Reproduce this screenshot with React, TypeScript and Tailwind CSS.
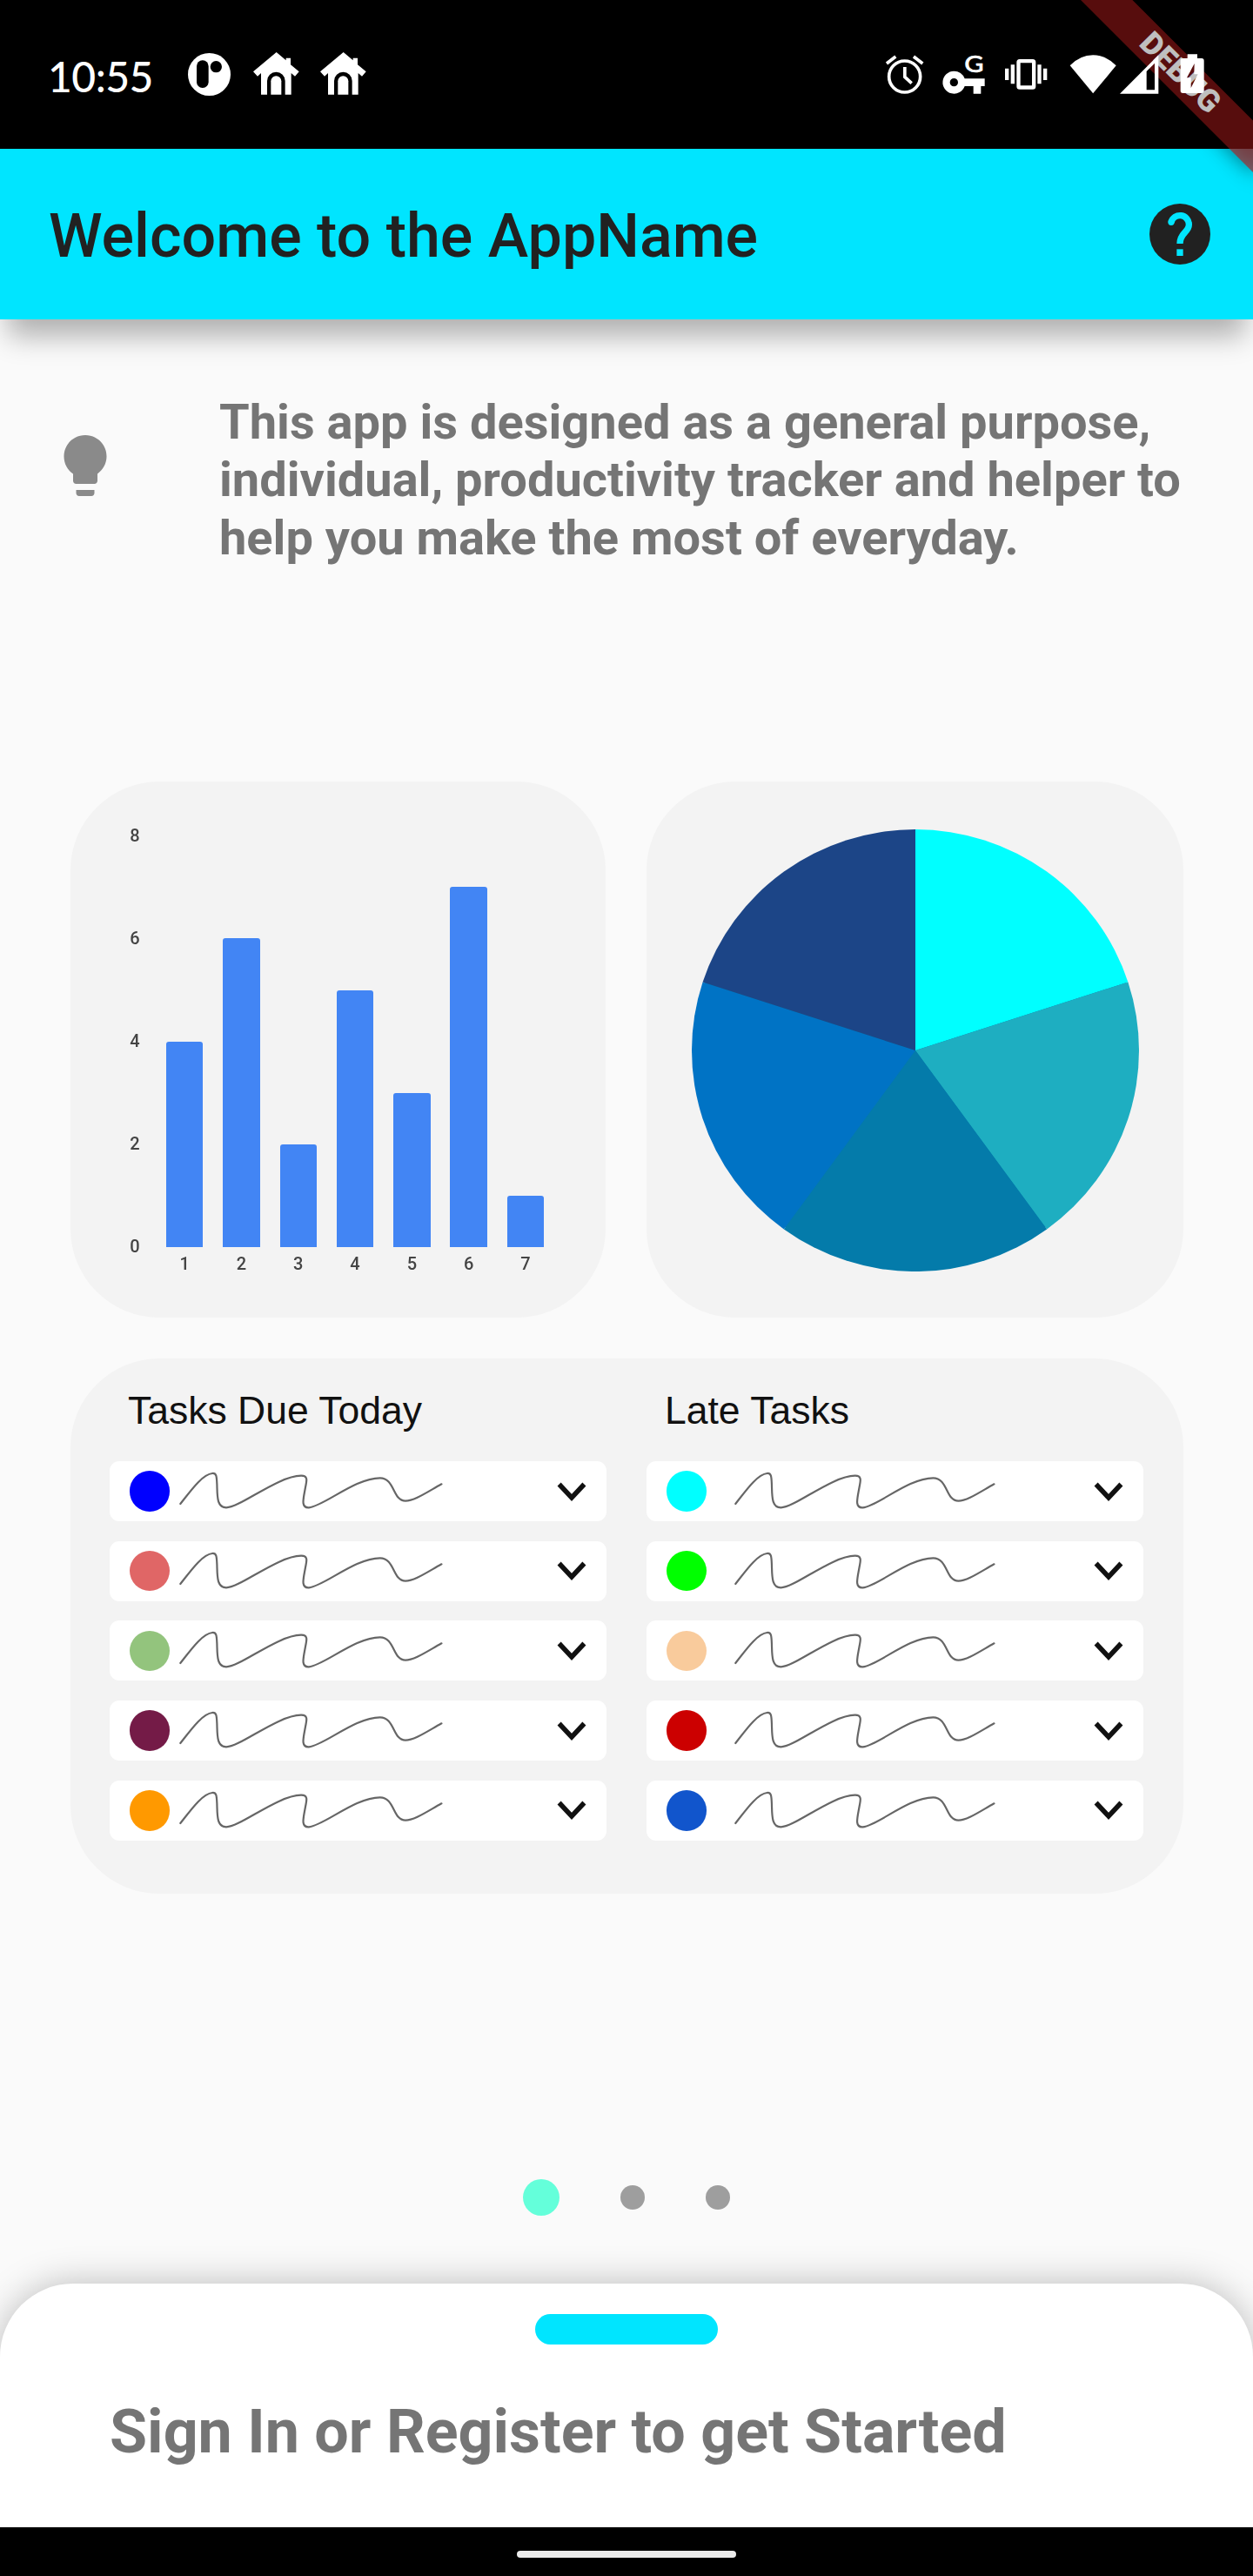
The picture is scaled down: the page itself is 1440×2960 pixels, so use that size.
const bars = [4, 6, 2, 5, 3, 7, 1];
const ticks = [8, 6, 4, 2, 0];

const dueToday = ['bg-[#0000ff]', 'bg-[#e06666]', 'bg-[#93c47d]', 'bg-[#741b47]', 'bg-[#ff9900]'];
const late = ['bg-[#00ffff]', 'bg-[#00ff00]', 'bg-[#f9cb9c]', 'bg-[#cc0000]', 'bg-[#1155cc]'];

function House() {
  return (
    <svg className="h-[49px] w-[53px]" viewBox="0 0 159 147" fill="white">
      <path d="M80 0L113 28V20H129V43L158 67L144 83L131 72V146H110V99A31 31 0 0 0 48 99V146H27V72L15 83L0 67Z" />
      <path d="M61 146V100A18 18 0 0 1 97 100V146Z" />
    </svg>
  );
}

function StatusBar() {
  return (
    <div className="relative z-20 flex h-[171px] shrink-0 items-start text-white">
      <span className="mt-[59px] ml-[55px] w-[161px] font-['Lato'] text-[48px] leading-[57px] font-medium tracking-[-0.5px]">10:55</span>
      <svg className="mt-[61px] h-[49px] w-[49px]" viewBox="648 183 147 147">
        <circle cx="721.5" cy="256.5" r="73.5" fill="white" />
        <rect x="678" y="208" width="41" height="95" rx="20" fill="black" />
        <circle cx="745" cy="230" r="20" fill="black" />
      </svg>
      <div className="mt-[60px] ml-[26px] flex gap-[24px]">
        <House />
        <House />
      </div>
      <svg className="mt-[50px] mr-[51.7px] ml-auto h-[70px] w-[375px]" viewBox="100 150 1125 210" fill="none">
        <g stroke="white" strokeWidth="11">
          <circle cx="180" cy="264" r="54" />
          <path d="M180.5 231V265L204 287M118 219L149 195M211 195L242 219" />
        </g>
        <path
          fill="white"
          fillRule="evenodd"
          d="M350 245A39 39 0 0 1 387 271H456V297H443V323H417V297H387A39 39 0 1 1 350 245ZM350 270A14 14 0 1 0 350 298A14 14 0 1 0 350 270Z"
        />
        <text x="386" y="248" fill="white" stroke="white" strokeWidth="1.5" fontFamily="Lato" fontWeight="500" fontSize="83" textLength="67" lengthAdjust="spacingAndGlyphs">
          G
        </text>
        <rect x="572.5" y="210.5" width="53" height="91" rx="4" stroke="white" strokeWidth="13" />
        <path fill="white" d="M526 236h13v40h-13zM546 223h13v66h-13zM638 223h13v66h-13zM658 236h13v40h-13z" />
        <path fill="white" d="M750 226Q785 190 829.5 190Q874 190 909 226L829.5 322Z" />
        <path fill="white" fillRule="evenodd" d="M922 323L1055 190V323ZM1014 246V310H1042V218Z" />
        <path
          fill="white"
          fillRule="evenodd"
          d="M1155 187H1189V201H1204Q1212 201 1212 209V313Q1212 321 1204 321H1139Q1131 321 1131 313V209Q1131 201 1139 201H1155ZM1179 219L1153 268H1167V303L1191 256H1178Z"
        />
      </svg>
    </div>
  );
}

function DebugBanner() {
  return (
    <div className="absolute top-0 right-0 z-10 h-[300px] w-[300px] overflow-hidden">
      <div className="absolute top-[98px] left-[160px] h-[42px] w-[280px] origin-[140px_-98px] rotate-45">
        <div className="absolute inset-0 bg-black/50 blur-[12px]" />
        <div className="absolute inset-0 flex items-center justify-center bg-[#b71c1c]/63">
          <span className="font-['Roboto'] text-[35.7px] leading-none font-black text-white">DEBUG</span>
        </div>
      </div>
      <div className="absolute inset-x-0 top-0 h-[171px] bg-black/25" />
    </div>
  );
}

function AppBar() {
  return (
    <header className="flex h-[196px] shrink-0 items-center justify-between bg-[#00e5ff] pr-[42px] pl-[56px]">
      <h1 className="pt-[4px] text-[70px] leading-[82px] font-medium text-[#212121]">Welcome to the AppName</h1>
      <svg className="h-[84px] w-[84px]" viewBox="1002 681 252 252" fill="none">
        <circle cx="1128" cy="807" r="105" fill="#212121" />
        <path d="M1098 766A31 31 0 0 1 1159 775C1159 801 1128 802 1128 840" stroke="#00e5ff" strokeWidth="22" />
        <circle cx="1098" cy="766" r="11" fill="#00e5ff" />
        <rect x="1117" y="859" width="22" height="23" fill="#00e5ff" />
      </svg>
    </header>
  );
}

function BarCard() {
  return (
    <div className="flex h-[616px] w-[615px] rounded-[102px] bg-[#f3f3f3] pt-[50px] font-['Roboto'] text-[20px] leading-[24px] font-medium text-[#444]">
      <div className="ml-[68px] flex h-[496px] w-[12px] flex-col justify-between text-center blur-[0.7px]">
        {ticks.map((t) => (
          <span key={t}>{t}</span>
        ))}
      </div>
      <div className="ml-[30px] flex h-[516px] items-end gap-[22.9px]">
        {bars.map((v, i) => (
          <div key={i} className="flex w-[42.4px] flex-col items-center">
            <div className="w-full rounded-t-[3px] bg-[#4285f4]" style={{ height: v * 59.1 }} />
            <span className="mt-[7px] blur-[0.7px]">{i + 1}</span>
          </div>
        ))}
      </div>
    </div>
  );
}

function PieCard() {
  return (
    <div className="flex h-[616px] w-[617px] justify-center rounded-[102px] bg-[#f3f3f3] pt-[55px]">
      <svg className="h-[508px] w-[514px]" viewBox="-1 -1 2 2" preserveAspectRatio="none">
        <circle r="0.99" fill="#047baa" />
        <path d="M0 0V-1A1 1 0 0 1 .951 -.309Z" fill="#00ffff" />
        <path d="M0 0L.951 -.309A1 1 0 0 1 .588 .809Z" fill="#1eaec1" />
        <path d="M0 0L.588 .809A1 1 0 0 1 -.588 .809Z" fill="#047baa" />
        <path d="M0 0L-.588 .809A1 1 0 0 1 -.951 -.309Z" fill="#0073c5" />
        <path d="M0 0L-.951 -.309A1 1 0 0 1 0 -1Z" fill="#1c4587" />
      </svg>
    </div>
  );
}

function TaskRow({ color, wide }: { color: string; wide?: boolean }) {
  return (
    <li className="flex h-[69px] items-center rounded-[11px] bg-white pr-[20px] pl-[22.5px]">
      <span className={`h-[46.5px] w-[46.5px] rounded-full ${color}`} />
      <svg
        className={wide ? 'ml-[30px] h-[69px] w-[303px]' : 'ml-[9px] h-[69px] w-[306px]'}
        viewBox="78 0 306 69"
        preserveAspectRatio="none"
        fill="none"
        stroke="#666"
        strokeWidth="2.2"
        strokeLinecap="round"
      >
        <path d="M81.3 49C91 37 106 15 118 14C123 13.5 123 18 123.4 27C123.8 40 123 53.3 134 53.3C150 53.3 193 17 220 16.7C229 16.5 226 24 225 30C223 42 219 54 229 53.3C246 52 282 19.3 310.7 19.3C328 19.3 325 45.7 340 45.7C350 45.7 364 36 381.4 26.3" />
      </svg>
      <svg className="ml-auto h-[30px] w-[40px] blur-[0.5px]" viewBox="0 0 40 30" fill="none" stroke="#111" strokeWidth="5.6">
        <path d="M5.6 6.5L20 21.8L34.4 6.5" />
      </svg>
    </li>
  );
}

function TaskColumn({ title, colors, wide }: { title: string; colors: string[]; wide?: boolean }) {
  return (
    <section className="w-[571px]">
      <h2 className="ml-[21px] font-['Liberation_Sans'] text-[44.5px] leading-[52px] text-[#111]">{title}</h2>
      <ul className="mt-[32px] flex flex-col gap-[22.7px]">
        {colors.map((c) => (
          <TaskRow key={c} color={c} wide={wide} />
        ))}
      </ul>
    </section>
  );
}

export default function App() {
  return (
    <div className="relative flex h-[2960px] w-[1440px] flex-col overflow-hidden bg-black font-['Roboto',sans-serif]">
      <StatusBar />
      <DebugBanner />
      <AppBar />
      <main className="flex flex-1 flex-col bg-[#fafafa]">
        <div className="h-[80px] shrink-0 overflow-hidden">
          <div className="-mt-[80px] h-[80px] shadow-[0_28px_32px_-9px_rgba(0,0,0,0.3)]" />
        </div>
        <div className="flex h-[200px] pl-[56px]">
          <svg className="mt-[46px] h-[84px] w-[84px]" viewBox="0 0 24 24" fill="#8a8a8a">
            <path d="M9 21c0 .5.4 1 1 1h4c.6 0 1-.5 1-1v-1H9v1zm3-19C8.1 2 5 5.1 5 9c0 2.4 1.2 4.5 3 5.7V17c0 .5.4 1 1 1h6c.6 0 1-.5 1-1v-2.3c1.8-1.3 3-3.4 3-5.7 0-3.9-3.1-7-7-7z" />
          </svg>
          <p className="mt-[5px] ml-[112px] text-[56px] leading-[66.4px] font-bold whitespace-nowrap text-[#757575]">
            This app is designed as a general purpose,
            <br />
            individual, productivity tracker and helper to
            <br />
            help you make the most of everyday.
          </p>
        </div>
        <div className="mt-[251px] ml-[81px] flex w-[1279px] justify-between">
          <BarCard />
          <PieCard />
        </div>
        <div className="mt-[47px] ml-[81px] flex h-[615px] w-[1279px] justify-between rounded-[102px] bg-[#f3f3f3] pt-[34px] pr-[46px] pl-[45px]">
          <TaskColumn title="Tasks Due Today" colors={dueToday} />
          <TaskColumn title="Late Tasks" colors={late} wide />
        </div>
        <div className="mt-[328px] ml-[601px] flex h-[42px] items-center gap-[70px]">
          <span className="h-[42px] w-[42px] rounded-full bg-[#64ffda]" />
          <span className="h-[28px] w-[28px] rounded-full bg-[#9e9e9e]" />
          <span className="h-[28px] w-[28px] rounded-full bg-[#9e9e9e]" />
        </div>
        <div className="mt-auto flex h-[280px] flex-col rounded-t-[84px] bg-white pt-[35px] shadow-[0_0_42px_rgba(0,0,0,0.25)]">
          <div className="h-[35px] w-[210px] self-center rounded-full bg-[#00e5ff]" />
          <p className="mt-[59px] ml-[126px] text-[70px] leading-[82px] font-bold text-[#757575]">Sign In or Register to get Started</p>
        </div>
      </main>
      <div className="z-10 flex h-[56px] shrink-0 justify-center bg-black pt-[27px]">
        <div className="h-[8px] w-[252px] rounded-full bg-[#ebebeb]" />
      </div>
    </div>
  );
}
